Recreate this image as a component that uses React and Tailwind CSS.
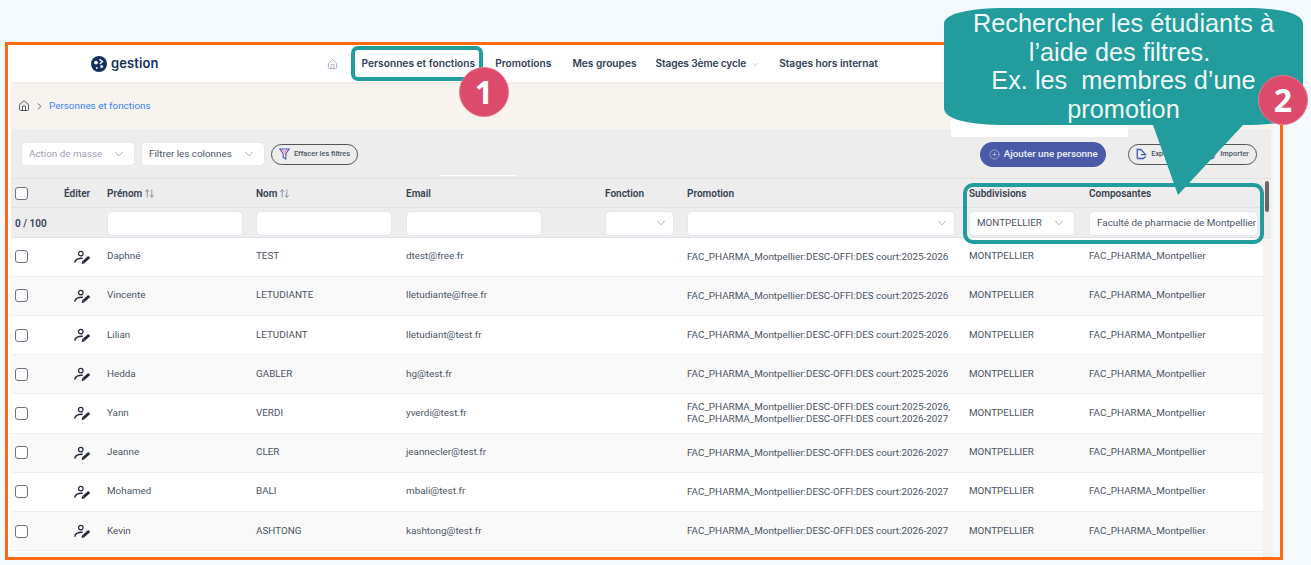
import React from "react";
import { ChevronDown, ChevronRight, CirclePlus, House, ArrowUpDown } from "lucide-react";

const cols =
  "grid grid-cols-[53px_43px_149px_150px_199px_82px_282px_120px_174px] items-center";

const promo25 = "FAC_PHARMA_Montpellier:DESC-OFFI:DES court:2025-2026";
const promo26 = "FAC_PHARMA_Montpellier:DESC-OFFI:DES court:2026-2027";

const rows = [
  { prenom: "Daphné", nom: "TEST", email: "dtest@free.fr", promo: [promo25] },
  { prenom: "Vincente", nom: "LETUDIANTE", email: "lletudiante@free.fr", promo: [promo25] },
  { prenom: "Lilian", nom: "LETUDIANT", email: "lletudiant@test.fr", promo: [promo25] },
  { prenom: "Hedda", nom: "GABLER", email: "hg@test.fr", promo: [promo25] },
  { prenom: "Yann", nom: "VERDI", email: "yverdi@test.fr", promo: [promo25 + ",", promo26] },
  { prenom: "Jeanne", nom: "CLER", email: "jeannecler@test.fr", promo: [promo26] },
  { prenom: "Mohamed", nom: "BALI", email: "mbali@test.fr", promo: [promo26] },
  { prenom: "Kevin", nom: "ASHTONG", email: "kashtong@test.fr", promo: [promo26] },
];

const Logo = () => (
  <svg width="16" height="16" viewBox="0 0 16 16">
    <circle cx="8" cy="8" r="8" fill="#12305c" />
    <circle cx="5" cy="6.6" r="1.9" fill="#fff" />
    <circle cx="10.6" cy="10.4" r="1.5" fill="#fff" />
    <circle cx="5.8" cy="12" r="0.9" fill="#fff" />
    <path d="M8.4 3.4 L11.6 5.6 L8.8 8" fill="none" stroke="#fff" strokeWidth="1.3" />
  </svg>
);

const EditIcon = () => (
  <svg width="17" height="15" viewBox="0 0 17 15" fill="none">
    <circle cx="6.8" cy="3.6" r="2.3" stroke="#1f2937" strokeWidth="1.2" />
    <path d="M0.9 12.2 C1.2 9.6 3.2 8.2 8.2 8.2" stroke="#1f2937" strokeWidth="1.4" strokeLinecap="round" />
    <path d="M9.6 12 L15.2 7" stroke="#1f2937" strokeWidth="3" />
    <path d="M7.6 14 L8.4 10.8 L10.8 13.2 Z" fill="#1f2937" />
  </svg>
);

const FilterOffIcon = () => (
  <svg width="11" height="12" viewBox="0 0 11 12" fill="none" stroke="#4b5ab8" strokeWidth="1.1">
    <path d="M0.8 1 H10.2 L6.8 5.8 V11 L4.2 9.4 V5.8 Z" />
    <path d="M2.8 1.2 L8.2 7.2 M8.2 1.2 L6 4" stroke="#e0527a" strokeWidth="0.8" />
  </svg>
);

const ExportIcon = () => (
  <svg width="11" height="12" viewBox="0 0 11 12" fill="none" stroke="#4b5ab8" strokeWidth="1.3">
    <path d="M1.2 10.5 V1.5 H4.8 L9.6 6.6 H5 M1.2 10.5 H7.4 L9.6 8.6" />
  </svg>
);

const Select = ({ label, className, muted }) => (
  <div
    className={`flex items-center justify-between bg-white border border-[#e5e7eb] rounded-[5px] pl-[7px] pr-2 text-[9.85px] ${
      muted ? "text-[#9ca3af]" : "text-[#4b5563]"
    } ${className}`}
  >
    <span className="whitespace-nowrap">{label}</span>
    <ChevronDown size={14} strokeWidth={1} className="text-[#6b7280] shrink-0" />
  </div>
);

const FilterBox = ({ className = "", children }) => (
  <div
    className={`h-[25px] flex items-center bg-white border border-[#e2e8f0] rounded-[5px] ${className}`}
  >
    {children}
  </div>
);

const Pill = ({ icon, label }) => (
  <button className="h-[21px] flex items-center gap-[4px] px-[7px] rounded-full border border-[#555] text-[7.4px] font-medium text-[#4b5563] whitespace-nowrap">
    {icon}
    {label}
  </button>
);

const Check = () => (
  <span className="block w-[13px] h-[13px] rounded-[3px] border border-[#6b7280] bg-white" />
);

const TableRow = ({ row, odd }) => (
  <div
    className={`${cols} h-[39.2px] border-b border-[#eceff4] text-[9.85px] text-[#4b5563] ${
      odd ? "bg-[#f9f9fa]" : "bg-white"
    }`}
  >
    <div className="pl-1">
      <Check />
    </div>
    <div className="pl-[10px] pt-[1px]">
      <EditIcon />
    </div>
    <div>{row.prenom}</div>
    <div>{row.nom}</div>
    <div>{row.email}</div>
    <div />
    <div className="leading-[12px] whitespace-nowrap">
      {row.promo.map((p) => (
        <div key={p}>{p}</div>
      ))}
    </div>
    <div>MONTPELLIER</div>
    <div>FAC_PHARMA_Montpellier</div>
  </div>
);

const Badge = ({ n, className }) => (
  <div
    className={`absolute w-[50px] h-[50px] rounded-full bg-[#dc4a6c] border border-[#e8798f] text-white text-[32px] font-bold flex items-center justify-center font-['Open_Sans',sans-serif] ${className}`}
  >
    {n}
  </div>
);

export default function App() {
  return (
    <div className="relative w-[1311px] h-[565px] overflow-hidden bg-[#f5fafe] pt-[42px] pl-[5px] font-['Roboto',sans-serif]">
      <div className="w-[1278px] h-[518px] border-[3px] border-[#ff6a13] overflow-hidden">
        <div className="w-[1266px] h-full bg-white pl-[3px]">
          <div className="h-full flex flex-col bg-[#f7f4f0]">
            {/* nav */}
            <div className="h-[37px] shrink-0 pt-px flex items-center pl-[80px] bg-white shadow-[0_1px_2px_rgba(0,0,0,0.06)] relative text-[10.2px] font-semibold text-[#334155] font-['Inter',sans-serif]">
              <Logo />
              <span className="ml-[4px] text-[13px] font-semibold text-[#12305c] tracking-[0.1px]">gestion</span>
              <House size={11} strokeWidth={1.2} className="ml-[168px] text-[#6b7f99]" />
              <span className="ml-[24px]">Personnes et fonctions</span>
              <span className="ml-[20px]">Promotions</span>
              <span className="ml-[21px]">Mes groupes</span>
              <span className="ml-[19px] tracking-[-0.15px]">Stages 3ème cycle</span>
              <ChevronDown size={9} strokeWidth={1} className="ml-[5px] text-[#6b7280]" />
              <span className="ml-[19px] tracking-[-0.05px]">Stages hors internat</span>
            </div>

            {/* fil d'ariane */}
            <div className="h-[47px] shrink-0 pt-px flex items-center pl-[7px] gap-[4px] text-[9.9px] text-[#3b82f6]">
              <House size={12} strokeWidth={1.5} className="text-[#1f2937]" />
              <ChevronRight size={11} strokeWidth={1.5} className="text-[#1f2937]" />
              <span>Personnes et fonctions</span>
            </div>

            {/* barre d'actions */}
            <div className="relative w-[1260px] h-[50px] shrink-0 pt-px bg-[#ededed] flex items-center pl-[10px] pr-[14px] border-b border-[#e2e2e2]">
              <Select label="Action de masse" muted className="w-[114px] h-[24px]" />
              <Select label="Filtrer les colonnes" className="w-[124px] h-[24px] ml-[6px]" />
              <div className="ml-[6px]">
                <Pill icon={<FilterOffIcon />} label="Effacer les filtres" />
              </div>
              <div className="absolute left-[429px] top-[46px] w-[77px] h-px bg-white" />
              <button className="ml-auto h-[25px] w-[126px] flex items-center justify-center gap-[4px] rounded-full bg-[#4b5aa8] text-[9.8px] font-medium text-[#eef0fa] whitespace-nowrap">
                <CirclePlus size={11} strokeWidth={1} />
                Ajouter une personne
              </button>
              <div className="ml-[22px] flex gap-[10px]">
                <Pill icon={<ExportIcon />} label="Exporter" />
                <Pill icon={<ExportIcon />} label="Importer" />
              </div>
            </div>

            {/* en-tete du tableau */}
            <div className={`${cols} w-[1260px] h-[29px] shrink-0 pt-[1px] bg-[#ededed] border-b border-[#dfe3e8] text-[10px] font-semibold text-[#374151]`}>
              <div className="pl-1">
                <Check />
              </div>
              <div>Éditer</div>
              <div className="flex items-center gap-[2px]">
                Prénom <ArrowUpDown size={11} strokeWidth={1.2} className="text-[#4b5563]" />
              </div>
              <div className="flex items-center gap-[2px]">
                Nom <ArrowUpDown size={11} strokeWidth={1.2} className="text-[#4b5563]" />
              </div>
              <div>Email</div>
              <div>Fonction</div>
              <div>Promotion</div>
              <div>Subdivisions</div>
              <div>Composantes</div>
            </div>

            {/* filtres */}
            <div className={`${cols} w-[1260px] h-[29.6px] shrink-0 pt-[2px] bg-[#ededed] border-b border-[#dfe3e8] text-[9.85px] text-[#4b5563]`}>
              <div className="pl-1 text-[10px] font-semibold text-[#374151]">0 / 100</div>
              <div />
              <div>
                <FilterBox className="w-[136px]" />
              </div>
              <div>
                <FilterBox className="w-[136px]" />
              </div>
              <div>
                <FilterBox className="w-[136px]" />
              </div>
              <div>
                <FilterBox className="w-[69px] justify-end pr-[5px]">
                  <ChevronDown size={14} strokeWidth={1} className="text-[#6b7280]" />
                </FilterBox>
              </div>
              <div>
                <FilterBox className="w-[268px] justify-end pr-[5px]">
                  <ChevronDown size={14} strokeWidth={1} className="text-[#6b7280]" />
                </FilterBox>
              </div>
              <div>
                <Select label="MONTPELLIER" className="w-[106px] h-[25px]" />
              </div>
              <div>
                <FilterBox className="w-[169px] pl-[7px] whitespace-nowrap">Faculté de pharmacie de Montpellier</FilterBox>
              </div>
            </div>

            <div className="w-[1252px] flex-1 bg-white">
              {rows.map((row, i) => (
                <TableRow key={row.prenom} row={row} odd={i % 2 === 1} />
              ))}
            </div>
          </div>
        </div>
      </div>

      {/* ascenseur */}
      <div className="absolute left-[1265px] top-[181px] w-[4px] h-[31px] rounded-full bg-[#666]" />

      {/* zone blanche sous la bulle */}
      <div className="absolute left-[951px] top-[100px] w-[177px] h-[37px] bg-white" />

      {/* annotations */}
      <div className="absolute left-[351px] top-[46px] w-[132px] h-[35px] border-4 border-[#229c9c] rounded-[7px]" />
      <div className="absolute left-[963px] top-[183px] w-[301px] h-[61px] border-4 border-[#229c9c] rounded-[10px]" />
      <Badge n="1" className="left-[459px] top-[67px]" />

      <svg className="absolute left-0 top-0" width="1311" height="565">
        <path
          d="M944 24 C944 13 972 8 1005 8 L1245 8 C1280 8 1303 13 1303 24 L1303 108 C1303 120 1280 125 1243 125 L1178 195 L1153 125 L1005 125 C972 125 944 120 944 108 Z"
          fill="#229c9c"
        />
      </svg>
      <div className="absolute left-[944px] top-[9px] w-[359px] text-center text-[25.3px] leading-[28.6px] text-[#eef8f8] font-['Liberation_Sans',sans-serif]">
        <div>Rechercher les étudiants à</div>
        <div className="pr-[8px]">l’aide des filtres.</div>
        <div className="whitespace-pre">Ex. les  membres d’une</div>
        <div>promotion</div>
      </div>
      <Badge n="2" className="left-[1258px] top-[75px]" />
    </div>
  );
}
